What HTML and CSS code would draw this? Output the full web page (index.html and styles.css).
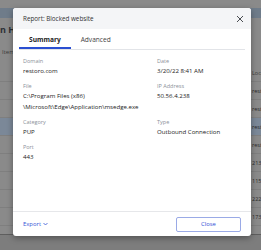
FILE: index.html
```html
<!DOCTYPE html>
<html lang="en">
<head>
  <meta charset="UTF-8">
  <title>Report: Blocked website</title>
  <link rel="stylesheet" href="styles.css">
</head>
<body>

  <!-- page behind the dialog -->
  <div class="app">
    <div class="app-bar"></div>
    <div class="app-title">n History</div>
    <div class="app-filter">Item</div>
    <div class="table">
      <div class="row head"><span>Loca</span></div>
      <div class="row"><span>rest</span></div>
      <div class="row"><span>rest</span></div>
      <div class="row selected"><span>rest</span></div>
      <div class="row"><span>rest</span></div>
      <div class="row"><span>213</span></div>
      <div class="row"><span>115</span></div>
      <div class="row"><span>222</span></div>
      <div class="row"><span>173</span></div>
    </div>
    <div class="app-bottom"></div>
  </div>

  <!-- report dialog -->
  <div class="dialog">
    <div class="dlg-head">
      <span>Report: Blocked website</span>
      <svg class="x-icon" width="8" height="8" viewBox="0 0 8 8">
        <path d="M1 1L7 7M7 1L1 7" stroke="#4a4d52" stroke-width="1" fill="none"/>
      </svg>
    </div>

    <div class="tabs">
      <div class="tab active">Summary</div>
      <div class="tab">Advanced</div>
    </div>

    <div class="dlg-body">
      <div class="field">
        <div class="label">Domain</div>
        <div class="value">restoro.com</div>
      </div>
      <div class="field">
        <div class="label">Date</div>
        <div class="value">3/20/22 8:41 AM</div>
      </div>
      <div class="field">
        <div class="label">File</div>
        <div class="value">C:\Program Files (x86)<br>\Microsoft\Edge\Application\msedge.exe</div>
      </div>
      <div class="field">
        <div class="label">IP Address</div>
        <div class="value">50.56.4.238</div>
      </div>
      <div class="field">
        <div class="label">Category</div>
        <div class="value">PUP</div>
      </div>
      <div class="field">
        <div class="label">Type</div>
        <div class="value">Outbound Connection</div>
      </div>
      <div class="field">
        <div class="label">Port</div>
        <div class="value">443</div>
      </div>
    </div>

    <div class="dlg-foot">
      <span class="export">Export
        <svg width="5" height="4" viewBox="0 0 5 4"><path d="M0.5 1L2.5 3L4.5 1" stroke="#3553d6" stroke-width="0.8" fill="none"/></svg>
      </span>
      <button class="close-btn">Close</button>
    </div>
  </div>

</body>
</html>
```

FILE: styles.css
```css
body {
  margin: 0;
  width: 261px;
  height: 250px;
  overflow: hidden;
  font-family: "Open Sans", "Liberation Sans", sans-serif;
  background: #8a8a8a;
  position: relative;
}

/* background app, dimmed */
.app {
  height: 250px;
  display: flex;
  flex-direction: column;
}

.app-bar {
  margin-top: 8px;
  height: 10px;
  background: #6f7c8a;
}

.app-title {
  height: 24px;
  line-height: 24px;
  font-size: 9px;
  font-weight: bold;
  color: #2c3036;
  white-space: nowrap;
}

.app-filter {
  height: 22px;
  line-height: 20px;
  padding-left: 2px;
  font-size: 6px;
  color: #3a3a3a;
}

.table {
  flex: 1;
}

.row {
  height: 18px;
  line-height: 18px;
  border-bottom: 1px solid #7f7f7f;
  box-sizing: border-box;
  font-size: 5.5px;
  color: #2a2a2a;
  white-space: nowrap;
}

.row span {
  padding-left: 252px;
}

.row.head {
  color: #3c3c3c;
}

.row.selected {
  background: #7b8898;
}

.app-bottom {
  height: 15px;
  background: #7d7d7d;
  border-top: 1px solid #5e5e5e;
}

/* dialog */
.dialog {
  position: absolute;
  left: 13px;
  top: 8px;
  width: 238px;
  height: 228px;
  background: #fff;
  border-radius: 3px;
  box-shadow: 0 2px 6px rgba(0,0,0,0.35);
  display: flex;
  flex-direction: column;
}

.dlg-head {
  height: 21px;
  flex-shrink: 0;
  background: #f4f5f7;
  border-radius: 3px 3px 0 0;
  display: flex;
  align-items: center;
  justify-content: space-between;
  padding: 0 7px 0 10px;
  font-size: 6.3px;
  color: #333;
}

.tabs {
  margin: 0 6px;
  height: 20px;
  flex-shrink: 0;
  display: flex;
  border-bottom: 1px solid #e2e4e8;
}

.tab {
  padding: 0 10px;
  display: flex;
  align-items: center;
  font-size: 6.6px;
  color: #444;
}

.tab.active {
  font-weight: bold;
  color: #222;
  box-shadow: inset 0 -2px 0 #2b4fd1;
}

.dlg-body {
  flex: 1;
  padding: 6px 10px 0;
  display: grid;
  grid-template-columns: 134px 1fr;
  align-content: start;
  row-gap: 4.5px;
}

.label {
  font-size: 5.5px;
  line-height: 10px;
  color: #8b9099;
}

.value {
  font-size: 6.1px;
  line-height: 10.5px;
  color: #222;
  white-space: nowrap;
}

.dlg-foot {
  height: 24px;
  flex-shrink: 0;
  border-top: 1px solid #e6e7ea;
  display: flex;
  align-items: center;
  justify-content: space-between;
  padding: 0 10px;
}

.export {
  font-size: 5.9px;
  color: #3553d6;
  display: flex;
  align-items: center;
  gap: 2px;
}

.close-btn {
  width: 65px;
  height: 15px;
  padding: 0;
  background: #fff;
  border: 1px solid #9aaae6;
  border-radius: 2px;
  font-family: inherit;
  font-size: 5.9px;
  color: #2f4fd6;
}
```
